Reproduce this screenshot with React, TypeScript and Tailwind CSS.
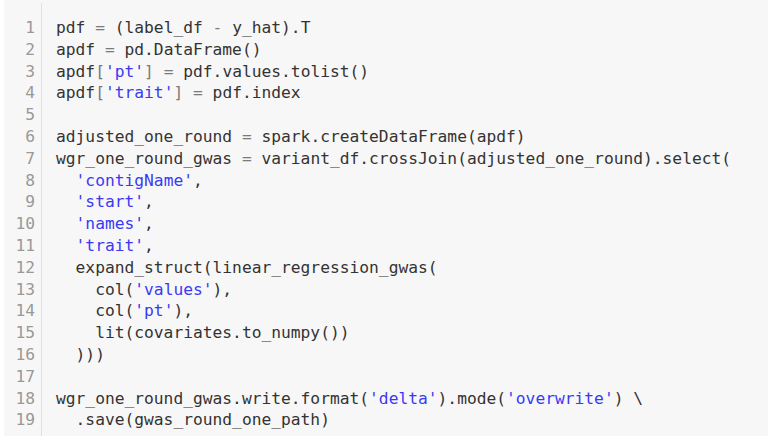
import React from 'react';

const lines: string[] = [
  "pdf = (label_df - y_hat).T",
  "apdf = pd.DataFrame()",
  "apdf['pt'] = pdf.values.tolist()",
  "apdf['trait'] = pdf.index",
  "",
  "adjusted_one_round = spark.createDataFrame(apdf)",
  "wgr_one_round_gwas = variant_df.crossJoin(adjusted_one_round).select(",
  "  'contigName',",
  "  'start',",
  "  'names',",
  "  'trait',",
  "  expand_struct(linear_regression_gwas(",
  "    col('values'),",
  "    col('pt'),",
  "    lit(covariates.to_numpy())",
  "  )))",
  "",
  "wgr_one_round_gwas.write.format('delta').mode('overwrite') \\",
  "  .save(gwas_round_one_path)",
];

// split a line into strings, operators and plain text
const tokenize = (line: string) => {
  const parts: { text: string; kind: 'str' | 'op' | 'plain' }[] = [];
  const re = /('[^']*')|([=\-\[\]])|([^'=\-\[\]]+)/g;
  let m: RegExpExecArray | null;
  while ((m = re.exec(line)) !== null) {
    if (m[1]) parts.push({ text: m[1], kind: 'str' });
    else if (m[2]) parts.push({ text: m[2], kind: 'op' });
    else parts.push({ text: m[3], kind: 'plain' });
  }
  return parts;
};

const kindClass = {
  str: 'text-[#3a3af2]',
  op: 'text-[#7a7a7a]',
  plain: 'text-[#333333]',
};

export default function App() {
  return (
    <div className="w-[768px] h-[444px] bg-white overflow-hidden">
      <div className="ml-[4px] h-[436px] bg-[#f7f7f7] pt-[3px] flex font-['DejaVu_Sans_Mono',monospace] text-[16.25px] leading-[21.8px]">
        <div className="w-[38px] shrink-0 border-r border-[#e0e0e0] pt-[14px] pr-[6px] text-right text-[#999999]">
          {lines.map((_, i) => (
            <div key={i}>{i + 1}</div>
          ))}
        </div>
        <div className="pl-[14px] pt-[14px] whitespace-pre">
          {lines.map((line, i) => (
            <div key={i} className="h-[21.8px]">
              {tokenize(line).map((t, j) => (
                <span key={j} className={kindClass[t.kind]}>{t.text}</span>
              ))}
            </div>
          ))}
        </div>
      </div>
    </div>
  );
}
